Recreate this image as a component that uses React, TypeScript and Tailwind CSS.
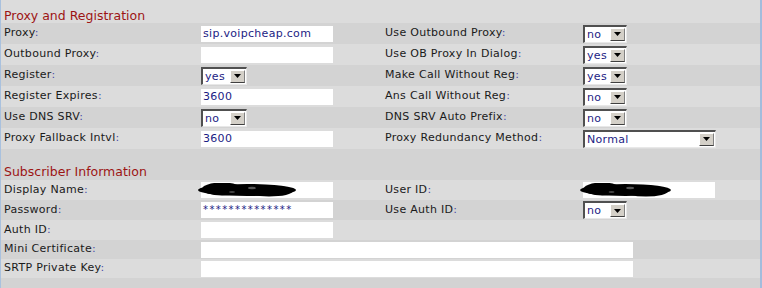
import React from 'react';

const LIGHT = 'bg-[#dcdcdc]';
const DARK = 'bg-[#d3d3d3]';

const Label = ({ text }: { text: string }) => (
    <span className="text-[#1a1a1a] whitespace-nowrap">
        {text}
        <span className="text-[#4a4aa8]">:</span>
    </span>
);

const TextBox = ({ value, w = 'w-[132px]', cls = '' }: { value?: string; w?: string; cls?: string }) => (
    <div className={`${w} h-[16px] bg-white flex items-center pl-[2px] text-[#1c1c84] leading-none ${cls}`}>
        {value}
    </div>
);

const Select = ({ value, w = 'w-[44px]' }: { value: string; w?: string }) => (
    <div className={`${w} h-[18px] bg-white flex items-stretch border-t-2 border-l-2 border-t-[#505050] border-l-[#505050] border-b border-r border-b-[#e8e8e8] border-r-[#e8e8e8]`}>
        <div className="flex-1 flex items-center pl-[2px] text-[#1c1c84] leading-none">{value}</div>
        <div className="w-[15px] my-[1px] mr-[1px] bg-[#d4d0c8] flex items-center justify-center border-t border-l border-t-white border-l-white border-b border-r border-b-[#404040] border-r-[#808080]">
            <svg width="7" height="4" viewBox="0 0 7 4">
                <path d="M0 0h7L3.5 4z" fill="#000" />
            </svg>
        </div>
    </div>
);

const Blob = ({ w }: { w: number }) => (
    <svg width={w} height="14" viewBox={`0 0 ${w} 14`} className="block">
        <ellipse cx={w / 2} cy="7" rx={w / 2 - 1} ry="6" fill="#000" />
        <ellipse cx={w * 0.25} cy="6" rx={w * 0.2} ry="6.5" fill="#000" />
        <ellipse cx={w * 0.72} cy="8" rx={w * 0.24} ry="5.5" fill="#000" />
        <ellipse cx={w * 0.55} cy="5" rx="4" ry="1.2" fill="#555" />
        <ellipse cx={w * 0.35} cy="9" rx="3" ry="1" fill="#444" />
    </svg>
);

type Cell = React.ReactNode;

const Row = ({ bg, h = 'h-[21px]', cells }: { bg: string; h?: string; cells: Cell[] }) => (
    <div className={`grid grid-cols-[200px_184px_198px_1fr] items-center ${h} ${bg}`}>
        {cells.map((c, i) => (
            <div key={i} className={i === 0 ? 'pl-[3px] flex items-center' : 'flex items-center'}>
                {c}
            </div>
        ))}
    </div>
);

export default function App() {
    return (
        <div
            className="w-[762px] h-[288px] overflow-hidden bg-[#d3d3d3] border-l border-l-[#a9c1de] border-r-2 border-r-[#a3bcdc] text-[11px] tracking-[0.3px]"
            style={{ fontFamily: '"DejaVu Sans", Verdana, sans-serif' }}
        >
            {/* Proxy and Registration */}
            <div className={`h-[23px] ${LIGHT} flex items-end pl-[3px] pb-[1px]`}>
                <span className="text-[12.5px] tracking-normal text-[#9c1414] leading-none">Proxy and Registration</span>
            </div>
            <Row bg={DARK} cells={[<Label text="Proxy" />, <TextBox value="sip.voipcheap.com" />, <Label text="Use Outbound Proxy" />, <Select value="no" />]} />
            <Row bg={LIGHT} cells={[<Label text="Outbound Proxy" />, <TextBox />, <Label text="Use OB Proxy In Dialog" />, <Select value="yes" />]} />
            <Row bg={DARK} cells={[<Label text="Register" />, <Select value="yes" w="w-[46px]" />, <Label text="Make Call Without Reg" />, <Select value="yes" />]} />
            <Row bg={LIGHT} cells={[<Label text="Register Expires" />, <TextBox value="3600" />, <Label text="Ans Call Without Reg" />, <Select value="no" />]} />
            <Row bg={DARK} cells={[<Label text="Use DNS SRV" />, <Select value="no" w="w-[46px]" />, <Label text="DNS SRV Auto Prefix" />, <Select value="no" />]} />
            <Row bg={LIGHT} cells={[<Label text="Proxy Fallback Intvl" />, <TextBox value="3600" />, <Label text="Proxy Redundancy Method" />, <Select value="Normal" w="w-[133px]" />]} />

            {/* Subscriber Information */}
            <div className={`h-[12px] ${DARK}`} />
            <div className={`h-[19px] ${DARK} flex items-end pl-[3px] pb-[2px]`}>
                <span className="text-[12.5px] tracking-normal text-[#9c1414] leading-none">Subscriber Information</span>
            </div>
            <Row bg={LIGHT} h="h-[20px]" cells={[<Label text="Display Name" />, <div className="relative"><TextBox /><div className="absolute left-[-4px] top-[1px]"><Blob w={100} /></div></div>, <Label text="User ID" />, <div className="relative"><TextBox /><div className="absolute left-[-4px] top-[1px]"><Blob w={93} /></div></div>]} />
            <Row bg={DARK} h="h-[20px]" cells={[<Label text="Password" />, <TextBox value="**************" cls="tracking-[1.4px] text-[10px]" />, <Label text="Use Auth ID" />, <Select value="no" />]} />
            <Row bg={LIGHT} h="h-[20px]" cells={[<Label text="Auth ID" />, <TextBox />, <span />, <span />]} />
            <div className={`grid grid-cols-[200px_1fr] items-center h-[19px] ${DARK}`}>
                <div className="pl-[3px]"><Label text="Mini Certificate" /></div>
                <TextBox w="w-[432px]" />
            </div>
            <div className={`grid grid-cols-[200px_1fr] items-center h-[19px] ${LIGHT}`}>
                <div className="pl-[3px]"><Label text="SRTP Private Key" /></div>
                <TextBox w="w-[432px]" />
            </div>
            <div className={`h-[12px] ${DARK}`} />
        </div>
    );
}
